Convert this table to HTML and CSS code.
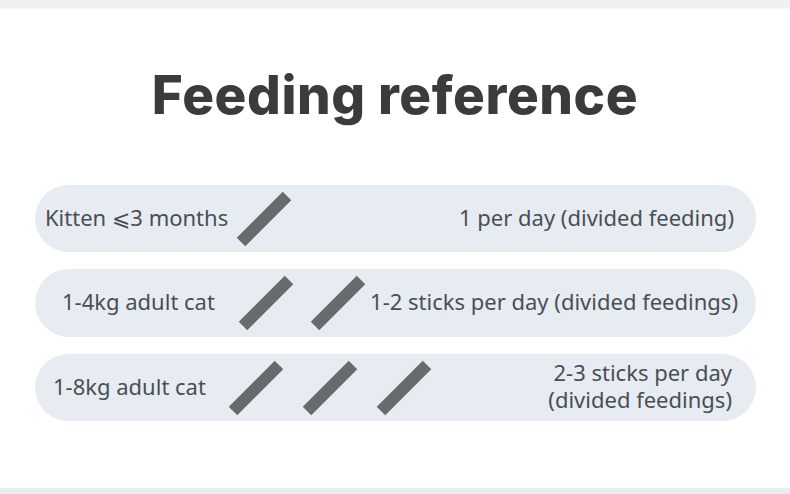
FILE: index.html
```html
<!DOCTYPE html>
<html lang="en">
<head>
<meta charset="utf-8">
<title>Feeding reference</title>
<link rel="stylesheet" href="styles.css">
</head>
<body>
<div class="page">
  <div class="top-band"></div>
  <h1 class="title">Feeding reference</h1>
  <div class="rows">
    <div class="row row-1">
      <span class="label">Kitten ⩽3 months</span>
      <div class="sticks">
        <svg class="stick" viewBox="0 0 56 56" width="56" height="56"><line x1="5" y1="51" x2="51" y2="5"/></svg>
      </div>
      <span class="amount">1 per day (divided feeding)</span>
    </div>
    <div class="row row-2">
      <span class="label">1-4kg adult cat</span>
      <div class="sticks">
        <svg class="stick" viewBox="0 0 56 56" width="56" height="56"><line x1="5" y1="51" x2="51" y2="5"/></svg>
        <svg class="stick" viewBox="0 0 56 56" width="56" height="56"><line x1="5" y1="51" x2="51" y2="5"/></svg>
      </div>
      <span class="amount">1-2 sticks per day (divided feedings)</span>
    </div>
    <div class="row row-3">
      <span class="label">1-8kg adult cat</span>
      <div class="sticks">
        <svg class="stick" viewBox="0 0 56 56" width="56" height="56"><line x1="5" y1="51" x2="51" y2="5"/></svg>
        <svg class="stick" viewBox="0 0 56 56" width="56" height="56"><line x1="5" y1="51" x2="51" y2="5"/></svg>
        <svg class="stick" viewBox="0 0 56 56" width="56" height="56"><line x1="5" y1="51" x2="51" y2="5"/></svg>
      </div>
      <div class="amount amount-two">
        <span class="line">2-3 sticks per day</span>
        <span class="line">(divided feedings)</span>
      </div>
    </div>
  </div>
  <div class="bottom-band"></div>
</div>
</body>
</html>
```
FILE: styles.css
```css
html, body {
  margin: 0;
  padding: 0;
  background: #ffffff;
}

.page {
  width: 790px;
  height: 494px;
  display: flex;
  flex-direction: column;
  overflow: hidden;
  font-family: "Noto Sans", "DejaVu Sans", sans-serif;
}

.top-band {
  height: 8px;
  background: #f0f0f0;
  border-bottom: 1px solid #f6f6f6;
  flex: none;
}

.title {
  margin: 0;
  padding-top: 62px;
  height: 112px;
  box-sizing: border-box;
  text-align: center;
  font-family: "Inter", "Lato", sans-serif;
  font-weight: 800;
  font-size: 53px;
  line-height: 48px;
  color: #3b3b3b;
  letter-spacing: 0.6px;
  flex: none;
}

.rows {
  margin-top: 64px;
  padding: 0 34px 0 35px;
  display: flex;
  flex-direction: column;
  gap: 17px;
  flex: none;
}

.row {
  height: 67px;
  border-radius: 34px;
  background: #e7ecf2;
  display: flex;
  align-items: center;
  color: #4a4f55;
  font-size: 22px;
  padding-right: 22px;
}

.row-1 { padding-left: 10px; }
.row-2 { padding-left: 27px; height: 68px; padding-right: 18px; }
.row-3 { padding-left: 18px; padding-right: 24px; }

.label {
  white-space: nowrap;
  margin-bottom: 4px;
}

.sticks {
  display: flex;
  align-items: center;
}

.stick {
  display: block;
}

.stick line {
  stroke: #676b6e;
  stroke-width: 12;
}

.row-1 .sticks { margin-left: 8px; }
.row-2 .sticks { margin-left: 23px; gap: 16px; }
.row-3 .sticks { margin-left: 22px; gap: 18px; }

.amount {
  margin-left: auto;
  white-space: nowrap;
  text-align: right;
  margin-bottom: 4px;
}

.amount-two {
  display: flex;
  flex-direction: column;
  line-height: 27px;
}

.line {
  display: block;
  height: 27px;
}

.bottom-band {
  margin-top: auto;
  height: 6px;
  background: #e9eef4;
  flex: none;
}
```
